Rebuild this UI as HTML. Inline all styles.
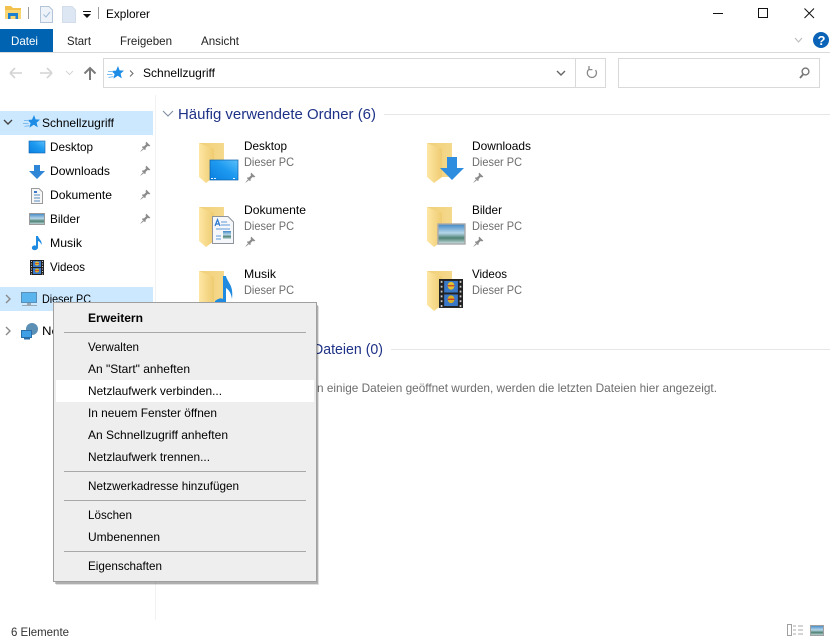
<!DOCTYPE html>
<html lang="de"><head><meta charset="utf-8"><title>Explorer</title>
<style>
html,body{margin:0;padding:0;background:#fff;width:830px;height:640px;overflow:hidden}
svg{display:block}
text{font-family:"Liberation Sans",sans-serif;font-size:12px;fill:#000;white-space:pre}
.g{fill:#6d6d6d}
.h{font-size:15px;fill:#1e3287}
</style></head><body>
<svg width="830" height="640" viewBox="0 0 830 640" xmlns="http://www.w3.org/2000/svg">
<defs>
<linearGradient id="fb" x1="0" x2="1" y1="0" y2="0"><stop offset="0" stop-color="#f0cf78"/><stop offset="1" stop-color="#f5d98c"/></linearGradient>
<linearGradient id="ff" x1="0" x2="1" y1="0" y2="0"><stop offset="0" stop-color="#fde7a4"/><stop offset="1" stop-color="#efcb70"/></linearGradient>
<linearGradient id="sky" x1="0" x2="1" y1="1" y2="0"><stop offset="0" stop-color="#0a7fe0"/><stop offset=".55" stop-color="#1e9af0"/><stop offset="1" stop-color="#5cc0fa"/></linearGradient>
<linearGradient id="pic" x1="0" x2="0" y1="0" y2="1"><stop offset="0" stop-color="#3f86c4"/><stop offset=".45" stop-color="#b6d6e8"/><stop offset=".7" stop-color="#4f8273"/><stop offset="1" stop-color="#cfe3ea"/></linearGradient>
<symbol id="folder" width="30" height="42" viewBox="0 0 30 42" overflow="visible">
  <rect x="0" y="0" width="25" height="34" fill="url(#fb)"/>
  <path d="M0 0 L15 6 L15 34 L7 40 L0 34 Z" fill="url(#ff)"/>
</symbol>
<symbol id="pin" width="11" height="11" viewBox="0 0 11 11">
  <path d="M6.2 .6 L10.4 4.8 L9 5.4 L7.6 5 L5.6 7 L5.6 8.6 L4.8 9 L2 6.2 L2.4 5.4 L4 5.4 L6 3.4 L5.6 2 Z" fill="#8c8c8c"/>
  <path d="M3 7.6 L.6 10.4 L3.6 8.2 Z" fill="#8c8c8c" stroke="#8c8c8c" stroke-width=".5"/>
</symbol>
<symbol id="star" width="18" height="16" viewBox="0 0 18 16">
  <path d="M11 1 L12.6 5.4 L17 5.6 L13.6 8.6 L14.8 13.4 L10.8 10.8 L6.4 13.6 L7.6 9 L4.4 6 L9 5.6 Z" fill="#1c8ce6"/>
  <path d="M1 6.5 L6 6.5 M0 9.5 L5.5 9.5 M1.5 12.5 L6.5 11.5" stroke="#7dbdf0" stroke-width="1"/>
</symbol>
<symbol id="film" width="14" height="15" viewBox="0 0 14 15">
  <rect width="14" height="15" fill="#222"/>
  <rect x="3" y="1" width="8" height="6" fill="#3a78c8"/><rect x="3" y="8" width="8" height="6" fill="#3a78c8"/>
  <circle cx="7" cy="3.5" r="2" fill="#e0c030"/><circle cx="7" cy="10.5" r="2" fill="#d8b020"/>
  <path d="M5 3.5h4M5 10.5h4" stroke="#c83c28" stroke-width=".7"/>
  <path d="M1 1.5h1M1 4h1M1 6.5h1M1 9h1M1 11.5h1M1 14h1M12 1.5h1M12 4h1M12 6.5h1M12 9h1M12 11.5h1M12 14h1" stroke="#ccc" stroke-width="1"/>
</symbol>
</defs>

<!-- Title bar -->
<path d="M5 6 H11 L13 8 H21 V12 H5 Z" fill="#f2c14e"/>
<rect x="5" y="10" width="16" height="9" fill="#f9d671"/>
<path d="M8 19 V13 H18 V19 H15.5 V16 H10.5 V19 Z" fill="#1c7fd0"/>
<rect x="28" y="7" width="1" height="12" fill="#9a9a9a"/>
<path d="M40.5 6.5 H49 L52.5 10 V22.5 H40.5 Z" fill="#eef3fa" stroke="#b4c4d8"/>
<path d="M43.5 14.5 L46 17 L50 12" fill="none" stroke="#a8c0da" stroke-width="1.2"/>
<path d="M62.5 6.5 H72 L75.5 10 V22.5 H62.5 Z" fill="#dde6f3" stroke="#d2dcea"/>
<rect x="83" y="11" width="8" height="1" fill="#111"/>
<path d="M83 14 H91 L87 18 Z" fill="#111"/>
<rect x="98" y="7" width="1" height="12" fill="#9a9a9a"/>
<text x="106" y="18" textLength="44" lengthAdjust="spacingAndGlyphs">Explorer</text>

<rect x="713" y="13" width="10" height="1" fill="#111"/>
<rect x="758.5" y="8.5" width="9" height="9" fill="none" stroke="#111"/>
<path d="M804.5 8.5 L814 18 M814 8.5 L804.5 18" stroke="#111" stroke-width="1" fill="none"/>

<!-- Ribbon -->
<rect x="0" y="29" width="53" height="23" fill="#0063b1"/>
<text x="11" y="45" textLength="27" lengthAdjust="spacingAndGlyphs" style="fill:#fff">Datei</text>
<text x="67" y="45" textLength="24" lengthAdjust="spacingAndGlyphs" style="fill:#222">Start</text>
<text x="120" y="45" textLength="52" lengthAdjust="spacingAndGlyphs" style="fill:#222">Freigeben</text>
<text x="201" y="45" textLength="38" lengthAdjust="spacingAndGlyphs" style="fill:#222">Ansicht</text>
<rect x="0" y="52" width="830" height="1" fill="#dadada"/>
<path d="M795 38 L798.5 42 L802 38" fill="none" stroke="#b8b8b8"/>
<circle cx="821" cy="40" r="8" fill="#0b63b8"/>
<text x="817.5" y="45" style="font-size:13px;font-weight:bold;fill:#fff">?</text>

<!-- Nav -->
<path d="M10 73 H22 M10 73 L15 68 M10 73 L15 78" stroke="#d4d4d4" stroke-width="1.6" fill="none"/>
<path d="M52 73 H40 M52 73 L47 68 M52 73 L47 78" stroke="#d4d4d4" stroke-width="1.6" fill="none"/>
<path d="M66 71 L69.5 74.5 L73 71" stroke="#d4d4d4" fill="none"/>
<path d="M90 80 V68 M84.5 73.5 L90 68 L95.5 73.5" stroke="#7a7a7a" stroke-width="2" fill="none"/>
<rect x="103.5" y="58.5" width="502" height="29" fill="#fff" stroke="#d9d9d9"/>
<rect x="575" y="59" width="1" height="28" fill="#d9d9d9"/>
<use href="#star" x="107" y="65"/>
<path d="M130 70.5 L133 73.5 L130 76.5" stroke="#666" fill="none"/>
<text x="143" y="77" textLength="72" lengthAdjust="spacingAndGlyphs">Schnellzugriff</text>
<path d="M557 71 L561 75 L565 71" stroke="#666" stroke-width="1.4" fill="none"/>
<path d="M595.5 70 A4.6 4.6 0 1 1 589 69.3 M589 66 V69.6 H592.4" stroke="#8a8a8a" stroke-width="1.3" fill="none"/>
<rect x="618.5" y="58.5" width="201" height="29" fill="#fff" stroke="#d9d9d9"/>
<circle cx="805.5" cy="71.5" r="3.4" fill="none" stroke="#777" stroke-width="1.4"/>
<path d="M803 74.5 L800 78" stroke="#777" stroke-width="1.8"/>

<!-- Sidebar -->
<rect x="155" y="95" width="1" height="525" fill="#f2f2f2"/>
<rect x="0" y="111" width="153" height="24" fill="#cce8ff"/>
<path d="M4 120 L8 124 L12 120" stroke="#444" stroke-width="1.4" fill="none"/>
<use href="#star" x="23" y="114"/>
<text x="42" y="127" textLength="72" lengthAdjust="spacingAndGlyphs">Schnellzugriff</text>

<rect x="29" y="141" width="16" height="12" fill="url(#sky)" stroke="#0a5ea8" stroke-width=".6"/>
<text x="50" y="151" textLength="43" lengthAdjust="spacingAndGlyphs">Desktop</text>
<use href="#pin" x="140" y="141"/>
<path d="M34 165 H40 V171 H45 L37 179 L29 171 H34 Z" fill="#2f86d6"/>
<text x="50" y="175" textLength="60" lengthAdjust="spacingAndGlyphs">Downloads</text>
<use href="#pin" x="140" y="165"/>
<path d="M31.5 188.5 H39 L42.5 192 V203.5 H31.5 Z" fill="#f6f6f6" stroke="#9a9a9a"/>
<path d="M34 195h6M34 198h6M34 201h6" stroke="#5a8cc0"/><path d="M34 192h3" stroke="#3a78c8" stroke-width="2"/>
<text x="50" y="199" textLength="62" lengthAdjust="spacingAndGlyphs">Dokumente</text>
<use href="#pin" x="140" y="189"/>
<rect x="29.5" y="213.5" width="15" height="11" fill="url(#pic)" stroke="#9a9a9a"/>
<text x="50" y="223" textLength="30" lengthAdjust="spacingAndGlyphs">Bilder</text>
<use href="#pin" x="140" y="213"/>
<path d="M36 236 H38 C38.5 239 42.5 240.5 41.5 245 C41 243 39.5 241.5 38 241 V247.5 C38 249.5 35.5 250.5 33.5 250 C31 249 31.5 246 34 245.5 C34.8 245.3 35.5 245.4 36 245.7 Z" fill="#1f8be0"/>
<text x="50" y="247" textLength="32" lengthAdjust="spacingAndGlyphs">Musik</text>
<use href="#film" x="30" y="260"/>
<text x="50" y="271" textLength="35" lengthAdjust="spacingAndGlyphs">Videos</text>

<rect x="0" y="287" width="153" height="24" fill="#cce8ff"/>
<path d="M6 295 L10 299 L6 303" stroke="#8a8a8a" stroke-width="1.4" fill="none"/>
<rect x="21.5" y="292.5" width="15" height="10" fill="#5ab4ee" stroke="#5a8fb8"/>
<rect x="27" y="303" width="4" height="2" fill="#9aa8b4"/><rect x="22" y="305" width="15" height="1" fill="#9aa8b4"/>
<text x="42" y="303" textLength="49" lengthAdjust="spacingAndGlyphs">Dieser PC</text>

<path d="M6 327 L10 331 L6 335" stroke="#8a8a8a" stroke-width="1.4" fill="none"/>
<circle cx="32" cy="329" r="6" fill="#5b8fb4"/>
<rect x="21.5" y="330.5" width="10" height="7" fill="#3fa0e6" stroke="#2a6ea8"/>
<rect x="24" y="338" width="6" height="1.5" fill="#2a6ea8"/>
<text x="42" y="335" textLength="55" lengthAdjust="spacingAndGlyphs">Netzwerk</text>

<!-- Content headers -->
<path d="M163 111 L168 116 L173 111" stroke="#7a8aa0" fill="none"/>
<text x="178" y="119" class="h" textLength="198" lengthAdjust="spacingAndGlyphs">Häufig verwendete Ordner (6)</text>
<rect x="384" y="114" width="446" height="1" fill="#e6e6e6"/>
<text x="313" y="354" class="h" textLength="70" lengthAdjust="spacingAndGlyphs">Dateien (0)</text>
<rect x="391" y="349" width="439" height="1" fill="#e6e6e6"/>
<text x="317" y="392" class="g" textLength="400" lengthAdjust="spacingAndGlyphs">n einige Dateien geöffnet wurden, werden die letzten Dateien hier angezeigt.</text>

<!-- Desktop -->
<use href="#folder" x="199" y="143"/>
<rect x="210" y="160" width="28" height="20" fill="url(#sky)" stroke="#0c5fa8" stroke-width=".7"/>
<path d="M211 178.5h2M214 178.5h2M233 178.5h2" stroke="#e8f4ff"/>
<text x="244" y="150" textLength="43" lengthAdjust="spacingAndGlyphs">Desktop</text>
<text x="244" y="166" class="g" textLength="50" lengthAdjust="spacingAndGlyphs">Dieser PC</text>
<use href="#pin" x="245" y="172"/>
<!-- Downloads -->
<use href="#folder" x="427" y="143"/>
<path d="M447 157 H457 V168 H464 L452 180 L440 168 H447 Z" fill="#2f8de0"/>
<text x="472" y="150" textLength="59" lengthAdjust="spacingAndGlyphs">Downloads</text>
<text x="472" y="166" class="g" textLength="50" lengthAdjust="spacingAndGlyphs">Dieser PC</text>
<use href="#pin" x="473" y="172"/>
<!-- Dokumente -->
<use href="#folder" x="199" y="207"/>
<path d="M212.5 216.5 H228 L233.5 222 V243.5 H212.5 Z" fill="#f5f7fa" stroke="#8e949c"/>
<path d="M215 226 L217.5 219.5 L220 226 M216 224h3" fill="none" stroke="#2a78d0" stroke-width="1.2"/>
<path d="M221 222h6M221 225h9M216 229h14M216 236h5M216 239h5" stroke="#5e9ad8"/>
<rect x="223" y="231" width="8" height="8" fill="url(#pic)"/>
<text x="244" y="214" textLength="62" lengthAdjust="spacingAndGlyphs">Dokumente</text>
<text x="244" y="230" class="g" textLength="50" lengthAdjust="spacingAndGlyphs">Dieser PC</text>
<use href="#pin" x="245" y="236"/>
<!-- Bilder -->
<use href="#folder" x="427" y="207"/>
<rect x="438" y="224" width="27" height="20" fill="url(#pic)" stroke="#a8a8a8" stroke-width="1.4"/>
<text x="472" y="214" textLength="30" lengthAdjust="spacingAndGlyphs">Bilder</text>
<text x="472" y="230" class="g" textLength="50" lengthAdjust="spacingAndGlyphs">Dieser PC</text>
<use href="#pin" x="473" y="236"/>
<!-- Musik -->
<use href="#folder" x="199" y="271"/>
<path d="M223 276 H226 C227 282 234 285 232 299 C231 293 229 290 226 288 V305 H215 V301 C219 298 221 298 223 299 Z" fill="#1f8be0"/>
<text x="244" y="278" textLength="32" lengthAdjust="spacingAndGlyphs">Musik</text>
<text x="244" y="294" class="g" textLength="50" lengthAdjust="spacingAndGlyphs">Dieser PC</text>
<!-- Videos -->
<use href="#folder" x="427" y="271"/>
<g transform="translate(439,279) scale(1.72,1.93)"><use href="#film"/></g>
<text x="472" y="278" textLength="35" lengthAdjust="spacingAndGlyphs">Videos</text>
<text x="472" y="294" class="g" textLength="50" lengthAdjust="spacingAndGlyphs">Dieser PC</text>

<!-- Context menu -->
<rect x="56" y="306" width="263" height="279" fill="#000" opacity=".12"/>
<rect x="55" y="305" width="263" height="279" fill="#000" opacity=".22"/>
<rect x="53.5" y="302.5" width="263" height="279" fill="#eeeeee" stroke="#a0a0a0"/>
<rect x="54" y="303" width="2" height="278" fill="#eeeeee"/>
<rect x="56" y="380" width="258" height="22" fill="#fff"/>
<rect x="64" y="332" width="242" height="1" fill="#a8a8a8"/>
<rect x="64" y="471" width="242" height="1" fill="#a8a8a8"/>
<rect x="64" y="500" width="242" height="1" fill="#a8a8a8"/>
<rect x="64" y="551" width="242" height="1" fill="#a8a8a8"/>
<text x="88" y="322" textLength="55" lengthAdjust="spacingAndGlyphs" style="font-weight:bold">Erweitern</text>
<text x="88" y="351" textLength="51" lengthAdjust="spacingAndGlyphs">Verwalten</text>
<text x="88" y="373" textLength="102" lengthAdjust="spacingAndGlyphs">An "Start" anheften</text>
<text x="88" y="395" textLength="134" lengthAdjust="spacingAndGlyphs">Netzlaufwerk verbinden...</text>
<text x="88" y="417" textLength="129" lengthAdjust="spacingAndGlyphs">In neuem Fenster öffnen</text>
<text x="88" y="439" textLength="140" lengthAdjust="spacingAndGlyphs">An Schnellzugriff anheften</text>
<text x="88" y="461" textLength="122" lengthAdjust="spacingAndGlyphs">Netzlaufwerk trennen...</text>
<text x="88" y="490" textLength="151" lengthAdjust="spacingAndGlyphs">Netzwerkadresse hinzufügen</text>
<text x="88" y="519" textLength="44" lengthAdjust="spacingAndGlyphs">Löschen</text>
<text x="88" y="541" textLength="72" lengthAdjust="spacingAndGlyphs">Umbenennen</text>
<text x="88" y="570" textLength="74" lengthAdjust="spacingAndGlyphs">Eigenschaften</text>

<!-- Status bar -->
<text x="11" y="636" textLength="58" lengthAdjust="spacingAndGlyphs" style="fill:#333">6 Elemente</text>
<rect x="787.5" y="624.5" width="4" height="11" fill="#fff" stroke="#a0a0a0"/>
<path d="M793 626h3M798 626h5M793 630h3M798 630h5M793 634h3M798 634h5" stroke="#a8a8a8"/>
<rect x="810.5" y="625.5" width="13" height="10" fill="url(#pic)" stroke="#a0a0a0"/>
</svg>
</body></html>
